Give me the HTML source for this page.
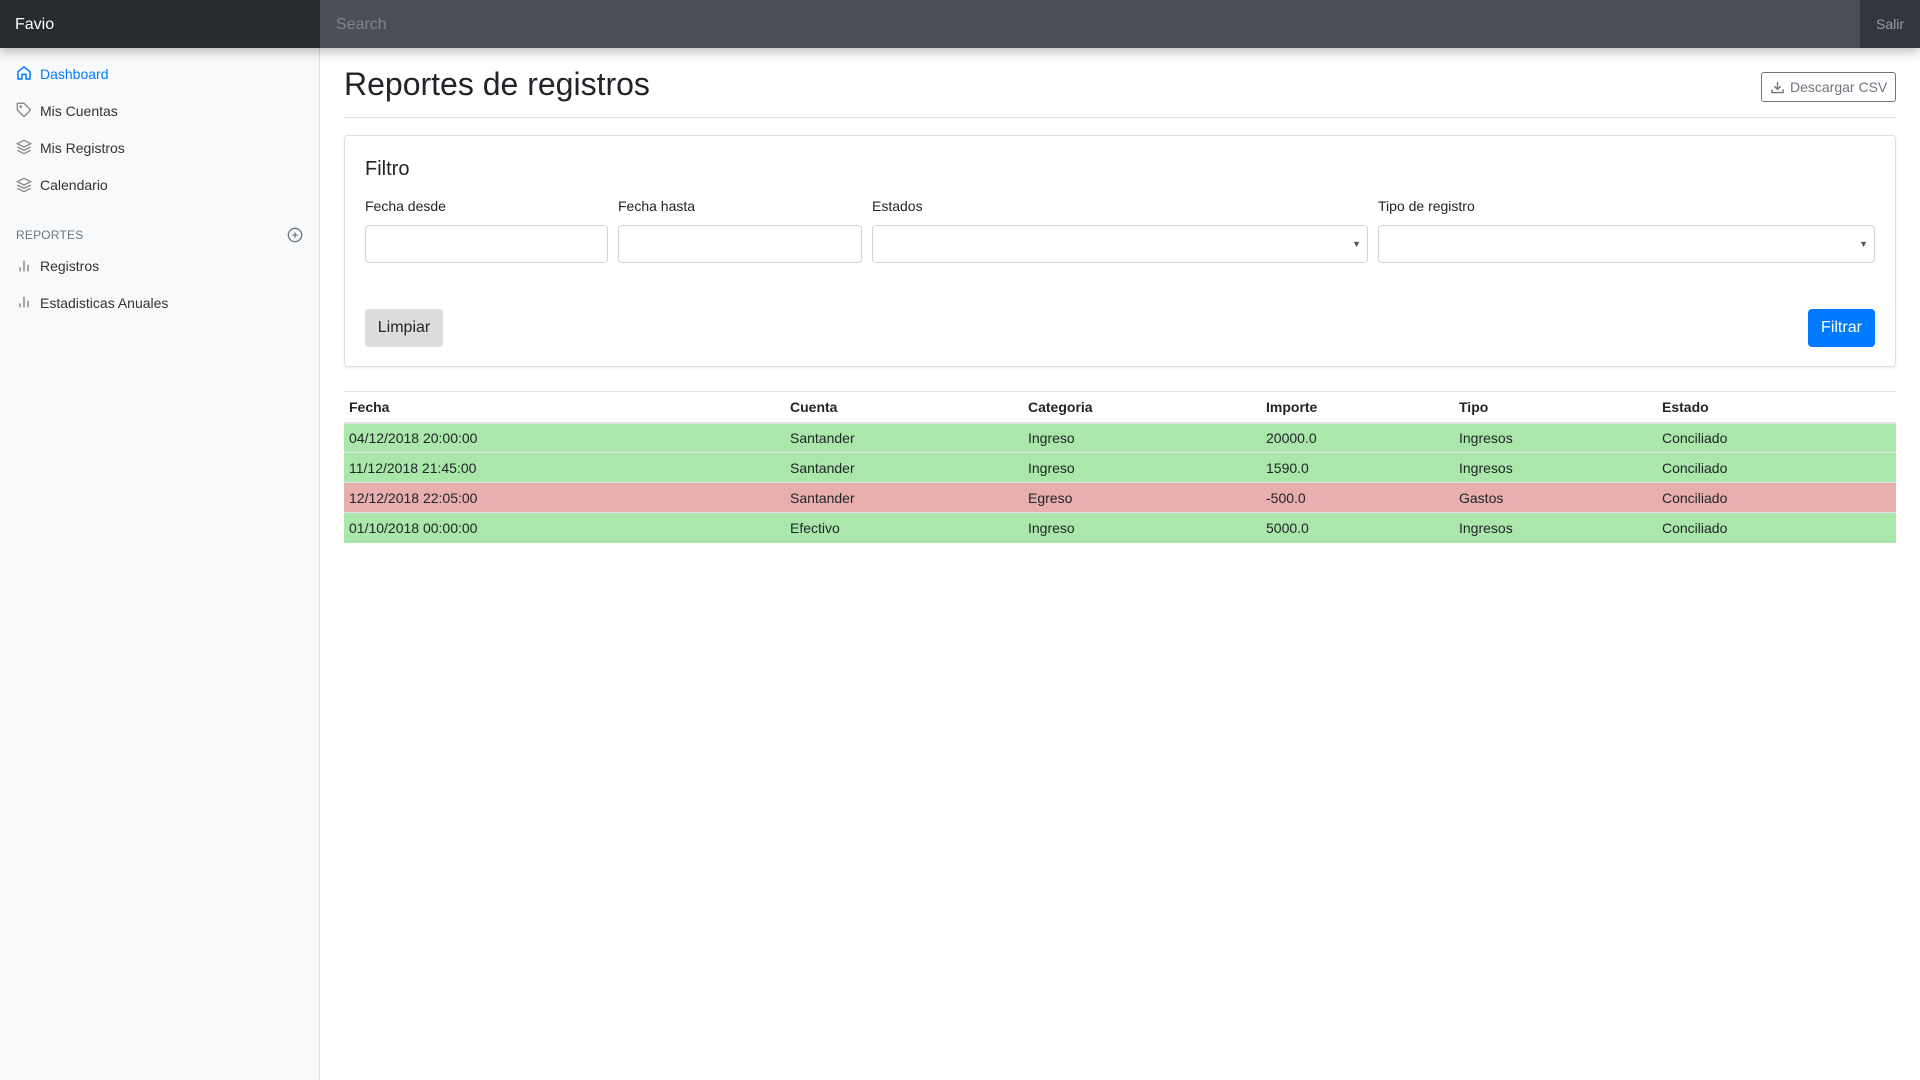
<!DOCTYPE html>
<html><head><meta charset="utf-8"><style>
*{box-sizing:border-box;margin:0;padding:0}
body{width:1920px;height:1080px;overflow:hidden;font-family:"Liberation Sans",sans-serif;color:#212529;background:#fff;position:relative}
.nav{position:absolute;left:0;top:0;width:1920px;height:48px;background:#272b30;box-shadow:0 4px 10px rgba(0,0,0,.25);z-index:5}
.brand{position:absolute;left:15px;top:1px;line-height:48px;color:#fff;font-size:16px}
.search{position:absolute;left:320px;top:0;width:1540px;height:48px;background:#4a4e56;color:#80848b;font-size:16px;line-height:48px;padding-left:16px;padding-top:1px}
.salir{position:absolute;left:1860px;top:0;width:60px;height:48px;background:#33373d;color:#9a9da2;font-size:14px;line-height:48px;text-align:center}
.side{position:absolute;left:0;top:48px;width:320px;height:1032px;background:#f8f9fa;border-right:1px solid #dcdfe2}
.it{position:absolute;left:40px;font-size:14px;color:#333;line-height:20px}
.ic{position:absolute;left:16px;width:16px;height:16px}
.hd{position:absolute;left:16px;top:180px;font-size:12px;color:#6c757d;letter-spacing:.2px}
h1{position:absolute;left:344px;top:62px;font-size:32px;font-weight:400;line-height:44px}
.hr{position:absolute;left:344px;top:117px;width:1552px;height:1px;background:#dee2e6}
.csv{position:absolute;left:1761px;top:72px;width:135px;height:30px;border:1px solid #6c757d;border-radius:3px;color:#6c757d;font-size:14px;line-height:28px;padding-left:28px}
.card{position:absolute;left:344px;top:135px;width:1552px;height:232px;border:1px solid #dfdfdf;border-radius:4px;box-shadow:0 1px 3px rgba(0,0,0,.08)}
.ft{position:absolute;left:365px;top:156px;font-size:20px;line-height:26px}
.lb{position:absolute;top:197px;font-size:14px;line-height:18px}
.in{position:absolute;top:225px;height:38px;border:1px solid #ced4da;border-radius:4px;background:#fff}
.ar{position:absolute;right:6px;top:13px;font-size:9px;color:#555}
.b1{position:absolute;left:365px;top:309px;width:78px;height:38px;background:#dcdcdc;border-radius:4px;font-size:16px;line-height:38px;text-align:center}
.b2{position:absolute;left:1808px;top:309px;width:67px;height:38px;background:#007bff;color:#fff;border-radius:4px;font-size:16px;line-height:38px;text-align:center}
table{position:absolute;left:344px;top:391px;width:1552px;border-collapse:collapse;font-size:14px}
td,th{padding:0 5px;height:30px;text-align:left;color:#212529}
th{border-top:1px solid #dee2e6;border-bottom:2px solid #dee2e6;height:31px}
td{border-top:1px solid #dee2e6}
.g td{background:#abe7ab}.r td{background:#e9aeae}
</style></head><body>
<div class="nav"><div class="brand">Favio</div><div class="search">Search</div><div class="salir">Salir</div></div>
<div class="side">
<svg class="ic" style="top:17px" viewBox="0 0 24 24" fill="none" stroke="#007bff" stroke-width="2.2"><path d="M3 10l9-7 9 7v11h-6v-7H9v7H3z"/></svg>
<div class="it" style="top:16px;color:#007bff">Dashboard</div>
<svg class="ic" style="top:54px" viewBox="0 0 24 24" fill="none" stroke="#888" stroke-width="2"><path d="M20.6 13.4l-7.2 7.2a2 2 0 0 1-2.8 0L2 12V2h10l8.6 8.6a2 2 0 0 1 0 2.8z"/><circle cx="7" cy="7" r="1"/></svg>
<div class="it" style="top:53px">Mis Cuentas</div>
<svg class="ic" style="top:91px" viewBox="0 0 24 24" fill="none" stroke="#888" stroke-width="2"><path d="M12 2L2 7l10 5 10-5-10-5zM2 17l10 5 10-5M2 12l10 5 10-5"/></svg>
<div class="it" style="top:90px">Mis Registros</div>
<svg class="ic" style="top:129px" viewBox="0 0 24 24" fill="none" stroke="#888" stroke-width="2"><path d="M12 2L2 7l10 5 10-5-10-5zM2 17l10 5 10-5M2 12l10 5 10-5"/></svg>
<div class="it" style="top:127px">Calendario</div>
<div class="hd">REPORTES</div>
<svg style="position:absolute;left:287px;top:179px;width:16px;height:16px" viewBox="0 0 24 24" fill="none" stroke="#6c757d" stroke-width="2"><circle cx="12" cy="12" r="10"/><path d="M12 8v8M8 12h8"/></svg>
<svg class="ic" style="top:210px" viewBox="0 0 24 24" fill="none" stroke="#888" stroke-width="2.2"><path d="M18 20V10M12 20V4M6 20v-6"/></svg>
<div class="it" style="top:208px">Registros</div>
<svg class="ic" style="top:246px" viewBox="0 0 24 24" fill="none" stroke="#888" stroke-width="2.2"><path d="M18 20V10M12 20V4M6 20v-6"/></svg>
<div class="it" style="top:245px">Estadisticas Anuales</div>
</div>
<h1>Reportes de registros</h1>
<div class="csv"><svg style="position:absolute;left:8px;top:7px;width:15px;height:15px" viewBox="0 0 24 24" fill="none" stroke="#6c757d" stroke-width="2.2"><path d="M21 15v5H3v-5M7 10l5 5 5-5M12 15V3"/></svg>Descargar CSV</div>
<div class="hr"></div>
<div class="card"></div>
<div class="ft">Filtro</div>
<div class="lb" style="left:365px">Fecha desde</div>
<div class="lb" style="left:618px">Fecha hasta</div>
<div class="lb" style="left:872px">Estados</div>
<div class="lb" style="left:1378px">Tipo de registro</div>
<div class="in" style="left:365px;width:243px"></div>
<div class="in" style="left:618px;width:244px"></div>
<div class="in" style="left:872px;width:496px"><span class="ar">▼</span></div>
<div class="in" style="left:1378px;width:497px"><span class="ar">▼</span></div>
<div class="b1">Limpiar</div>
<div class="b2">Filtrar</div>
<table>
<tr><th style="width:441px">Fecha</th><th style="width:238px">Cuenta</th><th style="width:238px">Categoria</th><th style="width:193px">Importe</th><th style="width:203px">Tipo</th><th>Estado</th></tr>
<tr class="g"><td>04/12/2018 20:00:00</td><td>Santander</td><td>Ingreso</td><td>20000.0</td><td>Ingresos</td><td>Conciliado</td></tr>
<tr class="g"><td>11/12/2018 21:45:00</td><td>Santander</td><td>Ingreso</td><td>1590.0</td><td>Ingresos</td><td>Conciliado</td></tr>
<tr class="r"><td>12/12/2018 22:05:00</td><td>Santander</td><td>Egreso</td><td>-500.0</td><td>Gastos</td><td>Conciliado</td></tr>
<tr class="g"><td>01/10/2018 00:00:00</td><td>Efectivo</td><td>Ingreso</td><td>5000.0</td><td>Ingresos</td><td>Conciliado</td></tr>
</table>
</body></html>
